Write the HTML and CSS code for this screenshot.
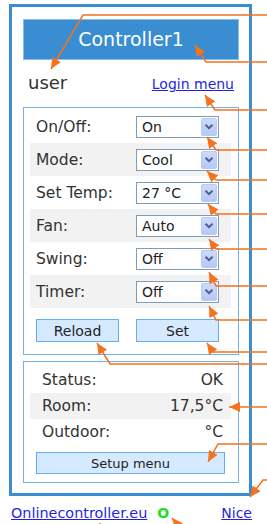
FILE: index.html
```html
<!DOCTYPE html>
<html lang="en">
<head>
    <meta charset="UTF-8">
    <meta name="viewport" content="width=device-width, initial-scale=1.0">
    <title>Controller1</title>
    <link rel="stylesheet" href="styles.css">
</head>
<body>
    <div class="frame">
        <div class="title">Controller1</div>

        <div class="userbar">
            <span class="user">user</span>
            <a href="#" class="link">Login menu</a>
        </div>

        <div class="panel controls">
            <div class="row">
                <label>On/Off:</label>
                <div class="sel"><select><option>On</option><option>Off</option></select><span class="drop"><svg width="16" height="17" viewBox="0 0 16 17"><path d="M4 6.5 L8 10.5 L12 6.5" fill="none" stroke="#4a5d8c" stroke-width="2.2"/></svg></span></div>
            </div>
            <div class="row">
                <label>Mode:</label>
                <div class="sel"><select><option>Cool</option><option>Heat</option></select><span class="drop"><svg width="16" height="17" viewBox="0 0 16 17"><path d="M4 6.5 L8 10.5 L12 6.5" fill="none" stroke="#4a5d8c" stroke-width="2.2"/></svg></span></div>
            </div>
            <div class="row">
                <label>Set Temp:</label>
                <div class="sel"><select><option>27 °C</option></select><span class="drop"><svg width="16" height="17" viewBox="0 0 16 17"><path d="M4 6.5 L8 10.5 L12 6.5" fill="none" stroke="#4a5d8c" stroke-width="2.2"/></svg></span></div>
            </div>
            <div class="row">
                <label>Fan:</label>
                <div class="sel"><select><option>Auto</option></select><span class="drop"><svg width="16" height="17" viewBox="0 0 16 17"><path d="M4 6.5 L8 10.5 L12 6.5" fill="none" stroke="#4a5d8c" stroke-width="2.2"/></svg></span></div>
            </div>
            <div class="row">
                <label>Swing:</label>
                <div class="sel"><select><option>Off</option></select><span class="drop"><svg width="16" height="17" viewBox="0 0 16 17"><path d="M4 6.5 L8 10.5 L12 6.5" fill="none" stroke="#4a5d8c" stroke-width="2.2"/></svg></span></div>
            </div>
            <div class="row">
                <label>Timer:</label>
                <div class="sel"><select><option>Off</option></select><span class="drop"><svg width="16" height="17" viewBox="0 0 16 17"><path d="M4 6.5 L8 10.5 L12 6.5" fill="none" stroke="#4a5d8c" stroke-width="2.2"/></svg></span></div>
            </div>
            <div class="buttons">
                <button class="btn">Reload</button>
                <button class="btn">Set</button>
            </div>
        </div>

        <div class="panel status">
            <div class="srow"><span>Status:</span><span>OK</span></div>
            <div class="srow"><span>Room:</span><span>17,5°C</span></div>
            <div class="srow"><span>Outdoor:</span><span>°C</span></div>
            <button class="btn wide">Setup menu</button>
        </div>
    </div>

    <div class="footer">
        <a href="#" class="link">Onlinecontroller.eu</a>
        <span class="online">O</span>
        <a href="#" class="link nice">Nice</a>
    </div>

    <!-- annotation arrows -->
    <svg class="notes" width="267" height="524" viewBox="0 0 267 524">
        <defs>
            <marker id="head" markerUnits="userSpaceOnUse" markerWidth="11" markerHeight="10" refX="11" refY="5" orient="auto">
                <path d="M0,0 L11,5 L0,10 z" fill="#f47220"/>
            </marker>
        </defs>
        <g fill="none" stroke="#f47220" stroke-width="1.5" marker-end="url(#head)">
            <polyline points="267,15 83,15 51,69"/>
            <polyline points="267,62 206,62 195,45"/>
            <polyline points="267,110 215,110 205,95"/>
            <polyline points="267,150 216,150 207,137"/>
            <polyline points="267,180 216,180 207,171"/>
            <polyline points="267,214 216,214 208,204"/>
            <polyline points="267,249 216,249 209,239"/>
            <polyline points="267,286 216,286 209,272"/>
            <polyline points="267,320 216,320 209,306"/>
            <polyline points="267,352 213,352 207,343"/>
            <polyline points="267,364 110,364 97,343"/>
            <polyline points="267,407 229,407"/>
            <polyline points="267,444 218,444 208,462"/>
            <polyline points="267,480 263,480 250,497"/>
            <polyline points="184,532 172,518"/>
            <polyline points="100,536 100,523"/>
        </g>
    </svg>
</body>
</html>
```

FILE: styles.css
```css
body {
    margin: 0;
    background: #fff;
    font-family: "DejaVu Sans", Verdana, sans-serif;
    color: #222;
}
.frame {
    box-sizing: border-box;
    width: 243px;
    margin: 4px 0 0 9px;
    padding: 12px 10px 10px 11px;
    border: 3px solid #3a8dd0;
}
.title {
    height: 41px;
    box-sizing: border-box;
    border: 1px solid #86bdea;
    background-color: #3a8dd0;
    color: #fff;
    font-size: 19px;
    line-height: 39px;
    text-align: center;
}
.userbar {
    box-sizing: border-box;
    height: 47px;
    padding: 12px 5px 0 5px;
    display: flex;
    justify-content: space-between;
    align-items: baseline;
}
.user {
    font-size: 18px;
    line-height: 22px;
    color: #333;
}
.link {
    color: #1f1fe6;
    font-size: 14px;
}
.panel {
    border: 1px solid #6fb1e8;
}
.controls {
    padding: 2px 7px 12px 6px;
}
.row {
    display: flex;
    align-items: center;
    height: 33px;
    padding-left: 6px;
}
.row:nth-child(even) {
    background-color: #f2f2f2;
}
.row label {
    width: 100px;
    font-size: 15.5px;
    color: #333;
}
.sel {
    position: relative;
    width: 83px;
    height: 22px;
}
.sel select {
    appearance: none;
    -webkit-appearance: none;
    box-sizing: border-box;
    width: 100%;
    height: 100%;
    margin: 0;
    padding: 0 0 0 5px;
    border: 1px solid #7f9db9;
    border-radius: 0;
    background: #fff;
    font-family: "DejaVu Sans", Verdana, sans-serif;
    font-size: 14px;
    color: #222;
}
.drop {
    position: absolute;
    top: 2px;
    right: 2px;
    width: 16px;
    height: 18px;
    box-sizing: border-box;
    border: 1px solid #b7c9f4;
    border-radius: 2px;
    background: linear-gradient(#ccdafc, #b6c8f6);
    display: flex;
    align-items: center;
    justify-content: center;
    pointer-events: none;
}
.buttons {
    display: flex;
    gap: 17px;
    margin-top: 11px;
    padding-left: 6px;
}
.btn {
    box-sizing: border-box;
    width: 83px;
    height: 23px;
    margin: 0;
    padding: 0;
    border: 1px solid #62aef0;
    border-radius: 0;
    background-color: #d6eaff;
    font-family: "DejaVu Sans", Verdana, sans-serif;
    font-size: 14px;
    color: #222;
}
.status {
    margin-top: 6px;
    padding: 5px 7px 8px 6px;
}
.srow {
    display: flex;
    justify-content: space-between;
    align-items: center;
    height: 26px;
    padding: 0 8px 0 12px;
    font-size: 15.5px;
    color: #333;
}
.srow:nth-child(2) {
    background-color: #f2f2f2;
}
.btn.wide {
    display: block;
    width: 189px;
    height: 22px;
    margin: 7px 0 0 6px;
    font-size: 13px;
}
.footer {
    display: flex;
    align-items: baseline;
    width: 243px;
    margin: 7px 0 0 9px;
    line-height: 20px;
}
.footer .link {
    margin-left: 2px;
    font-size: 14.4px;
}
.online {
    margin-left: 10px;
    color: #1ee01e;
    font-weight: bold;
    font-size: 14px;
}
.footer .nice {
    margin-left: auto;
    font-size: 14px;
}
.notes {
    position: absolute;
    top: 0;
    left: 0;
    pointer-events: none;
}
```
